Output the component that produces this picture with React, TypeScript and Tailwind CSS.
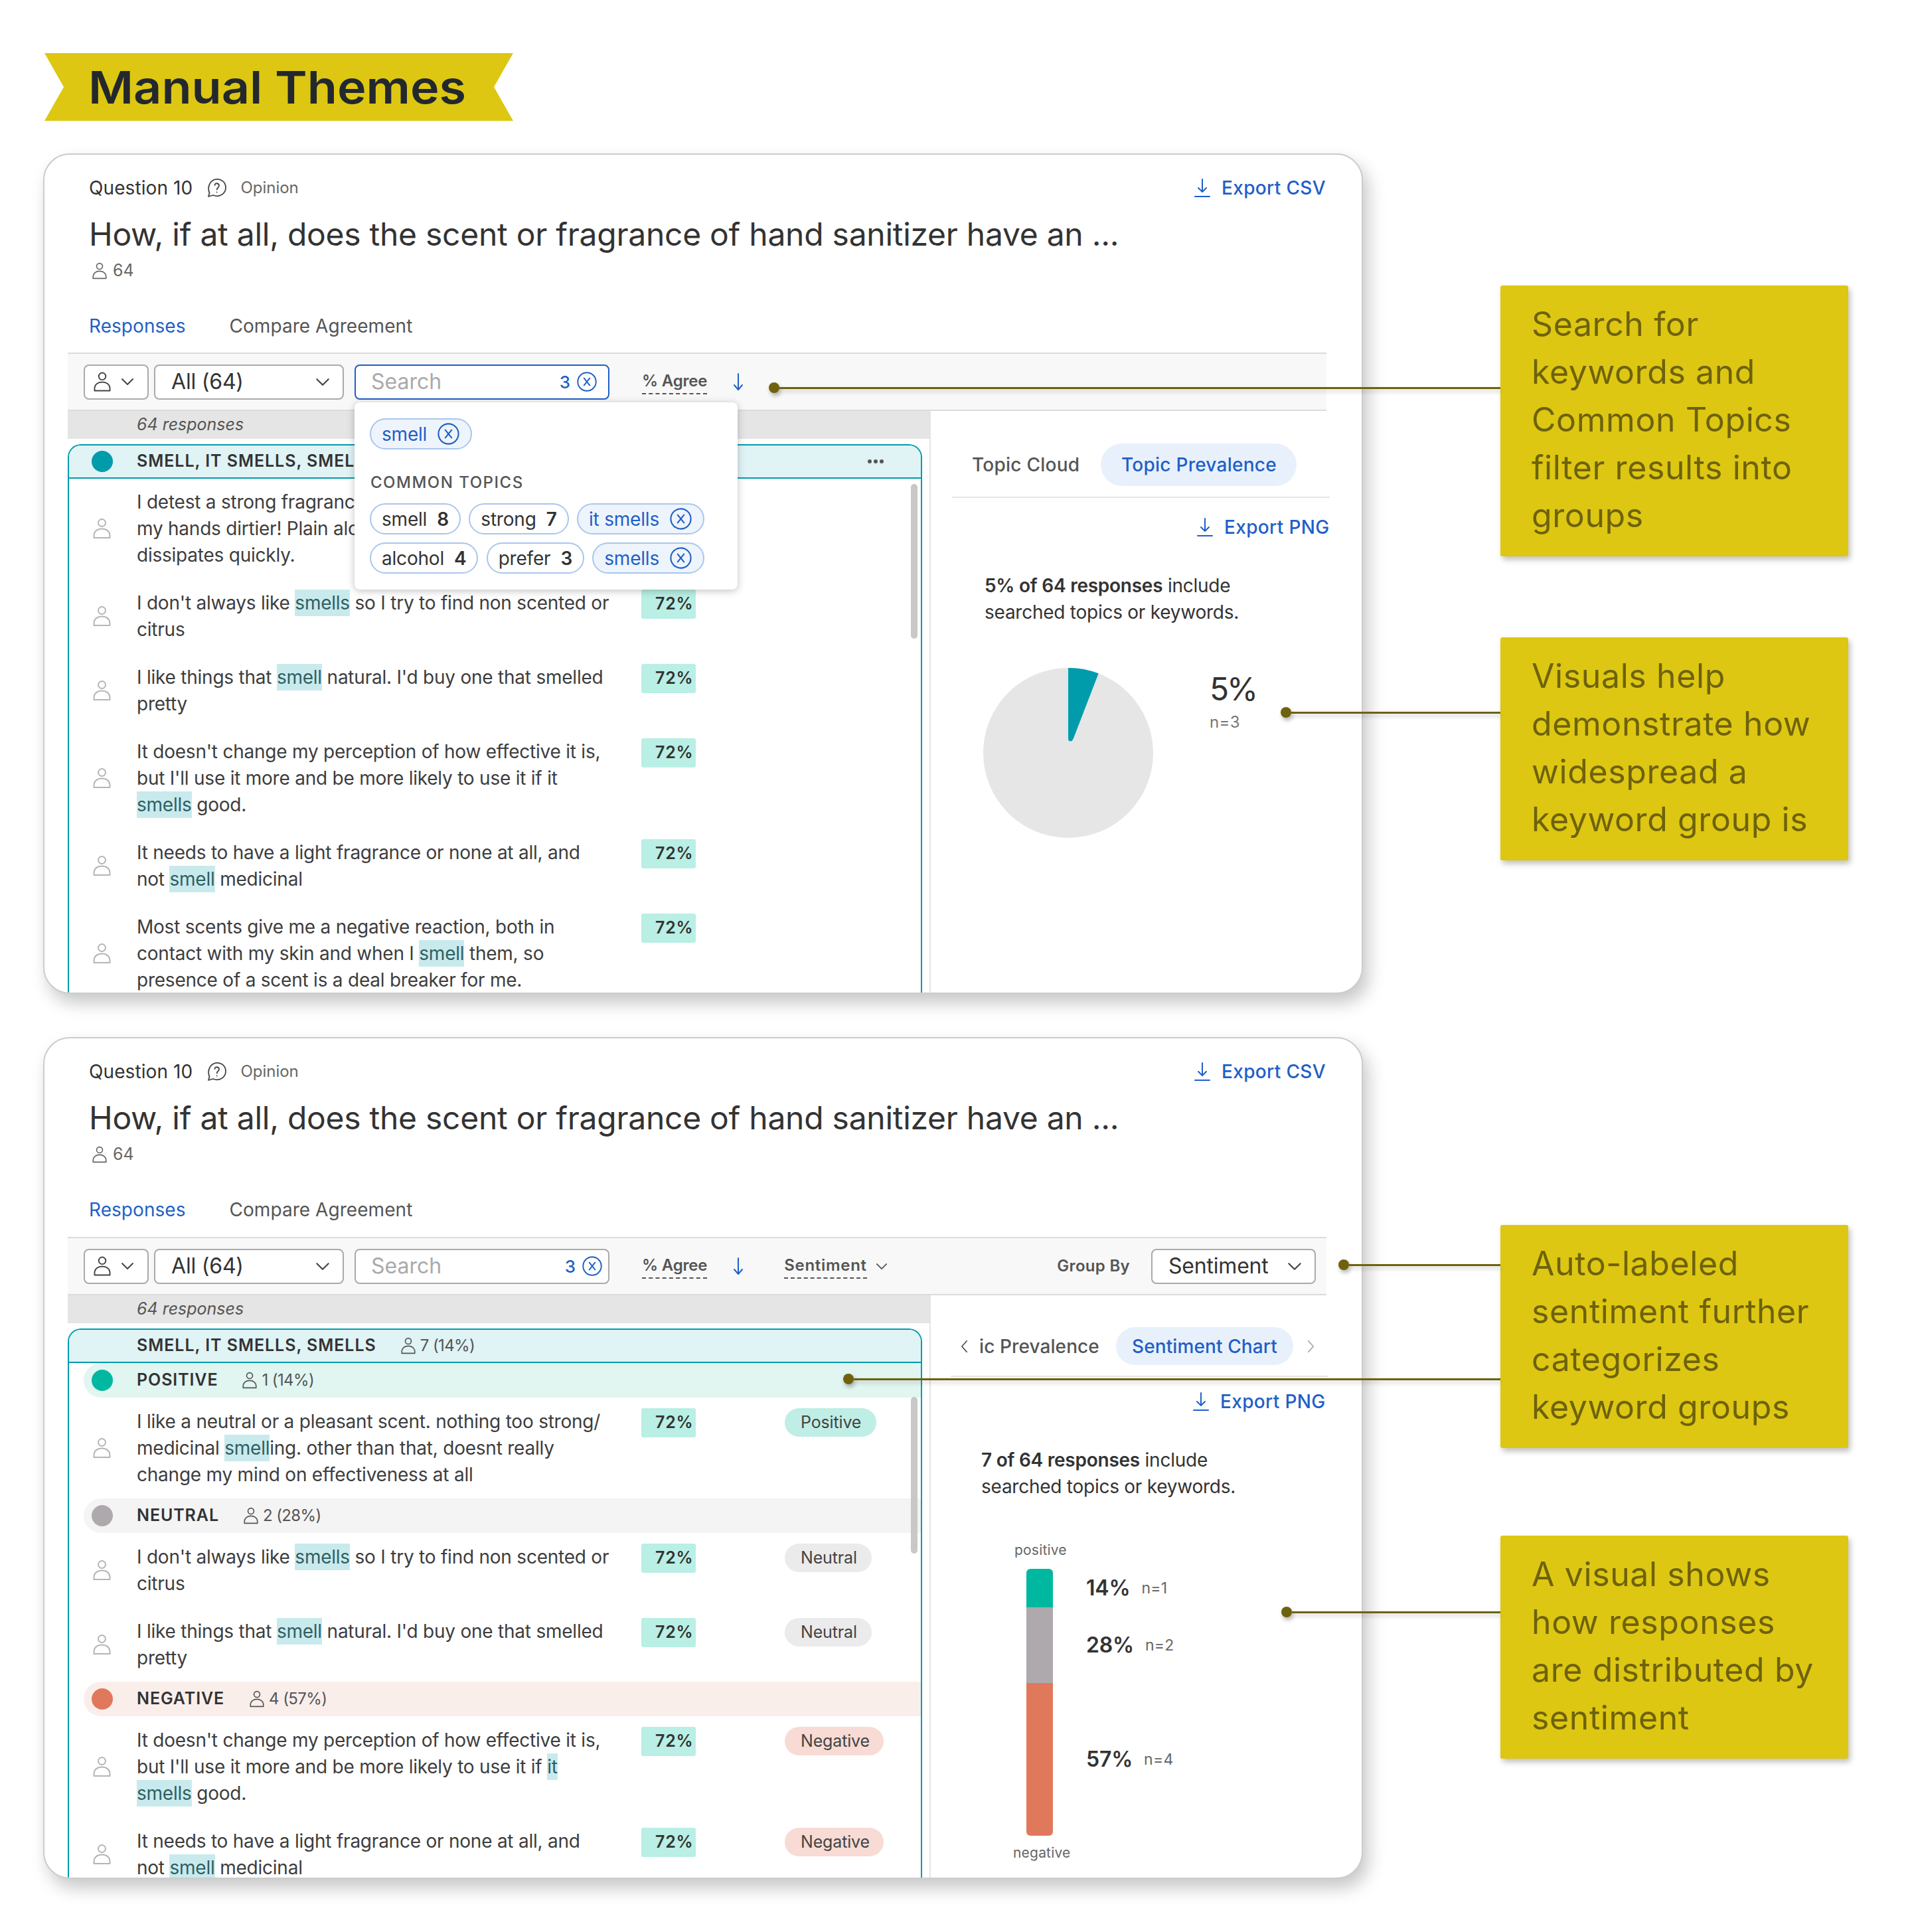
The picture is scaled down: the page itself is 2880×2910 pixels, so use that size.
import React from "react";

const Person = ({ className = "w-[27px] h-[30px] text-[#b5b5b5]", sw = 2 }: { className?: string; sw?: number }) => (
  <svg viewBox="0 0 27 30" className={className + " shrink-0"} fill="none" stroke="currentColor" strokeWidth={sw}>
    <circle cx="13.5" cy="6.5" r="5.5" />
    <path d="M1.5 29 V26 C1.5 19 7 15.5 13.5 15.5 C20 15.5 25.5 19 25.5 26 V29 Z" strokeLinejoin="round" />
  </svg>
);
const Chevron = ({ className = "w-[20px] h-[12px]" }: { className?: string }) => (
  <svg viewBox="0 0 20 12" className={className + " shrink-0"} fill="none" stroke="currentColor" strokeWidth={2} strokeLinecap="round" strokeLinejoin="round">
    <path d="M2 2 L10 10 L18 2" />
  </svg>
);
const Side = ({ d, className }: { d: string; className: string }) => (
  <svg viewBox="0 0 14 24" className={className + " shrink-0"} fill="none" stroke="currentColor" strokeWidth={2} strokeLinecap="round" strokeLinejoin="round">
    <path d={d} />
  </svg>
);
const CircleX = ({ className = "w-[30px] h-[30px]" }: { className?: string }) => (
  <svg viewBox="0 0 28 28" className={className + " shrink-0 text-[#1f5fc8]"} fill="none" stroke="currentColor" strokeWidth={1.8} strokeLinecap="round">
    <circle cx="14" cy="14" r="12.8" />
    <path d="M10 9 L18 19 M18 9 L10 19" />
  </svg>
);
const Download = () => (
  <svg viewBox="0 0 24 28" className="w-[24px] h-[28px] shrink-0 text-[#1f5fc8]" fill="none" stroke="currentColor" strokeWidth={2} strokeLinecap="round" strokeLinejoin="round">
    <path d="M12 1 V20 M6 14 L12 20 L18 14" />
    <path d="M1 27 H23" />
  </svg>
);
const ArrowDown = () => (
  <svg viewBox="0 0 16 26" className="w-[16px] h-[26px] shrink-0 text-[#1f5fc8]" fill="none" stroke="currentColor" strokeWidth={2} strokeLinecap="round" strokeLinejoin="round">
    <path d="M8 1 V25 M2 18 L8 25 L14 18" />
  </svg>
);
const Bubble = () => (
  <svg viewBox="0 0 32 30" className="w-[32px] h-[30px] shrink-0 text-[#444]" fill="none" stroke="currentColor" strokeWidth={1.8} strokeLinecap="round" strokeLinejoin="round">
    <path d="M4 28 L5.5 22.5 C2.5 16 4.5 6.5 12 3 C20 -0.5 30 4.5 30 14.5 C30 24 20 30 11 26 Z" />
    <path d="M13.5 11 C13.5 7 20 7.5 20 11.5 C20 14.5 16.7 14.5 16.7 17.5" />
    <path d="M16.7 21.5 V21.6" />
  </svg>
);

const Text = ({ s }: { s: string }) => {
  const parts = s.split(/(\[[^\]]+\])/);
  return (
    <div className="h-[40px] whitespace-nowrap">
      {parts.map((p, i) =>
        p.startsWith("[") ? (
          <span key={i} className="inline-block h-[40px] bg-[#c9eaec] text-[#2f5f63]">{p.slice(1, -1)}</span>
        ) : (
          <span key={i}>{p}</span>
        )
      )}
    </div>
  );
};

const chipStyles: Record<string, string> = {
  Positive: "bg-[#bfeee6] w-[138px]",
  Neutral: "bg-[#ebebeb] w-[131px]",
  Negative: "bg-[#f7dbd4] w-[149px]",
};

const Row = ({ lines, chip, clipped }: { lines: string[]; chip?: string; clipped?: boolean }) => (
  <div className="flex py-[16px]">
    <div className="w-[102px] pl-[36px] flex items-center shrink-0"><Person /></div>
    <div className={"shrink-0 text-[28px] leading-[40px] text-[#3d3d3d] tracking-[-0.23px] " + (clipped ? "w-[328px]" : "w-[760px]")}>
      {lines.map((l, i) => <Text key={i} s={l} />)}
    </div>
    {!clipped && (
      <div className="w-[82px] h-[44px] shrink-0 rounded-[3px] bg-[#b9efe4] flex items-center pl-[21px] text-[25px] font-semibold tracking-[0.8px] text-[#333]">72%</div>
    )}
    {chip && (
      <div className={"ml-[134px] h-[43px] rounded-full pl-[24px] flex items-center text-[25px] tracking-[-0.15px] text-[#444] " + chipStyles[chip]}>{chip}</div>
    )}
  </div>
);

const SentRow = ({ label, count, bg, dot, iconMl }: { label: string; count: string; bg: string; dot: string; iconMl: string }) => (
  <div className={"ml-[22px] h-[52px] rounded-l-full flex items-center pl-[12px] " + bg}>
    <div className={"w-[32px] h-[32px] rounded-full " + dot} />
    <div className="ml-[36px] text-[25px] font-semibold tracking-[0.9px] text-[#333]">{label}</div>
    <div className={"flex items-center " + iconMl}>
      <Person className="w-[22px] h-[26px] text-[#555]" />
      <span className="ml-[7px] text-[24px] tracking-[-0.6px] text-[#555]">{count}</span>
    </div>
  </div>
);

const TopChip = ({ t, n }: { t: string; n: string }) => (
  <div className="h-[47px] rounded-full border-2 border-[#a9c6ee] bg-white pl-[16px] pr-[16px] flex items-center text-[28px] tracking-[-0.2px] text-[#333]">
    <span>{t}</span><span className="ml-[15px] font-semibold">{n}</span>
  </div>
);
const SelChip = ({ t }: { t: string }) => (
  <div className="h-[47px] rounded-full border-2 border-[#a9c6ee] bg-[#eef4fc] pl-[16px] pr-[17px] flex items-center text-[28px] tracking-[-0.2px] text-[#1f5fc8]">
    <span>{t}</span><span className="ml-[16px]"><CircleX className="w-[33px] h-[33px]" /></span>
  </div>
);

const Popover = () => (
  <div className="absolute left-[467px] top-[373px] w-[577px] h-[282px] bg-white rounded-[8px] shadow-[0_2px_12px_rgba(0,0,0,0.25)] pl-[23px] pt-[24px] z-10">
    <div className="flex"><SelChip t="smell" /></div>
    <div className="mt-[36px] h-[28px] leading-[28px] text-[24px] font-medium tracking-[1.5px] text-[#555] pl-[1px]">COMMON TOPICS</div>
    <div className="mt-[17px] w-[504px] flex justify-between"><TopChip t="smell" n="8" /><TopChip t="strong" n="7" /><SelChip t="it smells" /></div>
    <div className="mt-[12px] w-[504px] flex justify-between"><TopChip t="alcohol" n="4" /><TopChip t="prefer" n="3" /><SelChip t="smells" /></div>
  </div>
);

const Dropdown = ({ w, label }: { w: string; label: string }) => (
  <div className={"h-[53px] rounded-[8px] border-2 border-[#aaa] bg-white flex items-center justify-between pl-[24px] pr-[19px] text-[32px] tracking-[-0.2px] text-[#333] " + w}>
    <span>{label}</span><Chevron className="w-[22px] h-[13px] text-[#444]" />
  </div>
);
const Dotted = ({ children, wide }: { children: React.ReactNode; wide?: boolean }) => (
  <span className={"inline-block border-b-2 border-dashed border-[#555] text-[24px] leading-[36px] font-semibold text-[#555] " + (wide ? "tracking-[0.7px]" : "tracking-[-0.2px]")}>{children}</span>
);

const Export = ({ label, ml }: { label: string; ml: string }) => (
  <div className={"flex items-center text-[28px] font-medium tracking-[0.35px] text-[#1f5fc8] " + ml}>
    <Download /><span className="ml-[17px]">{label}</span>
  </div>
);

const Card = ({ second, children, right }: { second?: boolean; children: React.ReactNode; right: React.ReactNode }) => (
  <div className={"relative w-[1988px] rounded-[40px] border-2 border-[#ccc] bg-white shadow-[8px_14px_26px_rgba(0,0,0,0.22)] overflow-hidden flex flex-col " + (second ? "h-[1268px] mt-[65px]" : "h-[1266px] mt-[49px]")}>
    <div className="pl-[67px] pr-[54px] pt-[30px]">
      <div className="h-[40px] flex items-center text-[28px] tracking-[0.1px] text-[#333]">
        <span>Question 10</span>
        <span className="ml-[20px]"><Bubble /></span>
        <span className="ml-[20px] text-[24px] tracking-normal text-[#666]">Opinion</span>
        <div className="ml-auto"><Export label="Export CSV" ml="" /></div>
      </div>
      <div className="mt-[18px] h-[64px] leading-[64px] text-[48px] text-[#333] tracking-[-0.27px] whitespace-nowrap">How, if at all, does the scent or fragrance of hand sanitizer have an ...</div>
      <div className="mt-[8px] h-[30px] flex items-center pl-[5px]">
        <Person className="w-[22px] h-[26px] text-[#666]" />
        <span className="ml-[9px] text-[25px] text-[#666]">64</span>
      </div>
      <div className="mt-[48px] h-[40px] flex items-center text-[28px] tracking-[0.05px]">
        <span className="text-[#1f5fc8]">Responses</span>
        <span className="ml-[66px] text-[#555]">Compare Agreement</span>
      </div>
    </div>
    <div className={"ml-[35px] w-[1896px] h-[88px] shrink-0 bg-[#f8f8f8] border-y-2 border-[#dcdcdc] flex items-center pl-[24px] pr-[16px] " + (second ? "mt-[21px]" : "mt-[20px]")}>
      <div className="w-[98px] h-[53px] rounded-[8px] border-2 border-[#aaa] bg-white flex items-center pl-[13px]">
        <Person className="w-[26px] h-[30px] text-[#444]" />
        <Chevron className="ml-[15px] w-[20px] h-[12px] text-[#444]" />
      </div>
      <div className="ml-[8px]"><Dropdown w="w-[286px]" label="All (64)" /></div>
      <div className={"ml-[16px] w-[384px] h-[53px] rounded-[8px] border-2 bg-white flex items-center pl-[23px] text-[32px] text-[#aaa] " + (second ? "border-[#aaa] pr-[9px]" : "border-[#1f5fc8] pr-[17px]")}>
        <span>Search</span>
        <span className="ml-auto mr-[10px] text-[26px] font-medium text-[#1f5fc8]">3</span>
        <CircleX />
      </div>
      <div className="ml-[49px]"><Dotted>% Agree</Dotted></div>
      <div className="ml-[39px]"><ArrowDown /></div>
      {second && (
        <>
          <div className="ml-[61px]"><Dotted wide>Sentiment</Dotted></div>
          <Chevron className="ml-[13px] w-[18px] h-[11px] text-[#555]" />
          <span className="ml-auto text-[24px] font-semibold tracking-[0.3px] text-[#555]">Group By</span>
          <div className="ml-[32px]"><Dropdown w="w-[248px]" label="Sentiment" /></div>
        </>
      )}
    </div>
    <div className="ml-[35px] flex-1 min-h-0 flex">
      <div className="w-[1298px] shrink-0 flex flex-col min-h-0">
        <div className="h-[42px] shrink-0 bg-[#e5e5e5] pl-[104px] flex items-center text-[25px] italic text-[#555]">64 responses</div>
        <div className="relative mt-[8px] w-[1287px] flex-1 min-h-0 border-x-2 border-t-2 border-[#019cac] rounded-t-[20px] overflow-hidden">
          {children}
        </div>
      </div>
      <div className="flex-1 border-l-2 border-[#e5e5e5] min-w-0">{right}</div>
    </div>
  </div>
);

const GroupHeader = ({ first }: { first?: boolean }) => (
  <div className="h-[50px] bg-[#e0f3f5] border-b-2 border-[#019cac] flex items-center text-[25px] font-semibold tracking-[0.95px] text-[#333]">
    <div className="w-[102px] pl-[34px]">{first && <div className="w-[32px] h-[32px] rounded-full bg-[#019cac]" />}</div>
    {first ? (
      <span className="whitespace-nowrap">SMELL, IT SMELLS, SMEL</span>
    ) : (
      <>
        <span>SMELL, IT SMELLS, SMELLS</span>
        <div className="ml-[37px] flex items-center font-normal tracking-[-0.6px] text-[24px] text-[#555]">
          <Person className="w-[22px] h-[26px] text-[#555]" />
          <span className="ml-[7px]">7 (14%)</span>
        </div>
      </>
    )}
    {first && <span className="ml-auto mr-[56px] flex gap-[3px]"><i className="w-[6px] h-[6px] rounded-full bg-[#555]" /><i className="w-[6px] h-[6px] rounded-full bg-[#555]" /><i className="w-[6px] h-[6px] rounded-full bg-[#555]" /></span>}
  </div>
);

const Pie = () => (
  <svg viewBox="0 0 256 256" className="w-[256px] h-[256px] shrink-0">
    <circle cx="128" cy="128" r="128" fill="#e6e6e6" />
    <path d="M128 0 A128 128 0 0 1 173.7 8.3 L136 106 Q134 110.5 131.5 110.5 Q128 110.5 128 106 Z" fill="#019cac" />
  </svg>
);

const Seg = ({ h, cls, pct, n, nm }: { h: string; cls: string; pct: string; n: string; nm: string }) => (
  <div className="flex items-center">
    <div className={"w-[40px] " + h + " " + cls} />
    <span className="ml-[50px] text-[32px] font-semibold tracking-[-0.2px] text-[#333]">{pct}</span>
    <span className={"text-[23px] tracking-[0.3px] text-[#666] " + nm}>{n}</span>
  </div>
);

const Right1 = () => (
  <div>
    <div className="pt-[49px] pl-[62px] flex items-center h-[113px] text-[28px] font-medium tracking-[0.25px]">
      <span className="text-[#555]">Topic Cloud</span>
      <span className="ml-[32px] h-[64px] w-[295px] rounded-full bg-[#e8f1fb] flex items-center justify-center text-[#1f5fc8]">Topic Prevalence</span>
    </div>
    <div className="ml-[32px] w-[569px] mt-[16px] h-[2px] bg-[#e5e5e5]" />
    <Export label="Export PNG" ml="mt-[23px] ml-[401px]" />
    <div className="mt-[47px] ml-[81px] text-[28px] leading-[40px] tracking-[-0.25px] text-[#333]">
      <div><span className="font-semibold">5% of 64 responses</span> include</div>
      <div>searched topics or keywords.</div>
    </div>
    <div className="mt-[64px] ml-[79px] flex">
      <Pie />
      <div className="ml-[85px] pt-[4px]">
        <div className="text-[48px] leading-[56px] tracking-[-3.2px] text-[#333]">5%</div>
        <div className="mt-[6px] text-[24px] leading-[32px] tracking-[0.4px] text-[#777]">n=3</div>
      </div>
    </div>
  </div>
);

const Right2 = () => (
  <div>
    <div className="pt-[48px] pl-[44px] flex items-center h-[105px] text-[28px] font-medium tracking-[0.1px]">
      <Side d="M11 3 L3 12 L11 21" className="w-[13px] h-[22px] text-[#555]" />
      <span className="ml-[16px] text-[#555]">ic Prevalence</span>
      <span className="ml-[25px] h-[57px] w-[267px] rounded-full bg-[#e8f1fb] flex items-center justify-center text-[#1f5fc8]">Sentiment Chart</span>
      <Side d="M3 3 L11 12 L3 21" className="ml-[20px] w-[13px] h-[22px] text-[#aaa]" />
    </div>
    <div className="ml-[30px] w-[569px] mt-[16px] h-[2px] bg-[#e5e5e5]" />
    <Export label="Export PNG" ml="mt-[16px] ml-[395px]" />
    <div className="mt-[47px] ml-[76px] text-[28px] leading-[40px] tracking-[-0.25px] text-[#333]">
      <div><span className="font-semibold">7 of 64 responses</span> include</div>
      <div>searched topics or keywords.</div>
    </div>
    <div className="mt-[59px] ml-[126px] text-[21px] leading-[34px] tracking-[0.2px] text-[#666]">positive</div>
    <div className="mt-[11px] ml-[144px] flex flex-col">
      <Seg h="h-[58px]" cls="bg-[#00b8a0] rounded-t-[6px]" pct="14%" n="n=1" nm="ml-[17px]" />
      <Seg h="h-[114px]" cls="bg-[#aea9ac]" pct="28%" n="n=2" nm="ml-[17px]" />
      <Seg h="h-[230px]" cls="bg-[#e0795c] rounded-b-[6px]" pct="57%" n="n=4" nm="ml-[17px]" />
    </div>
    <div className="mt-[9px] ml-[124px] text-[21px] leading-[34px] tracking-[0.2px] text-[#666]">negative</div>
  </div>
);

const Scrollbar = ({ h, top }: { h: string; top: string }) => (
  <div className={"absolute right-[5px] w-[10px] rounded-full bg-[#c8c8c8] " + h + " " + top} />
);

const Callout = ({ lines, mt }: { lines: string[]; mt: string }) => (
  <div className={"w-[524px] rounded-[3px] bg-[#ddc712] pt-[22px] pb-[26px] pl-[47px] shadow-[3px_5px_8px_rgba(0,0,0,0.25)] text-[50px] leading-[72px] tracking-[0.6px] text-[#6e620c] whitespace-nowrap " + mt}>
    {lines.map((l) => <div key={l}>{l}</div>)}
  </div>
);

const Connector = ({ left, top, w }: { left: string; top: string; w: string }) => (
  <div className={"absolute h-[16px] flex items-center z-20 " + left + " " + top + " " + w}>
    <div className="w-[16px] h-[16px] rounded-full bg-[#6e620c] shrink-0 shadow-[2px_4px_6px_rgba(0,0,0,0.3)]" />
    <div className="flex-1 h-[3px] bg-[#6e620c] shadow-[0_4px_6px_rgba(0,0,0,0.2)]" />
  </div>
);

const Popover2 = () => (
  <div className="absolute left-[67px] top-[233px] w-0 h-0"><Popover /></div>
);

export default function App() {
  return (
    <div className="relative w-[2880px] h-[2910px] bg-white overflow-hidden flex [font-family:Inter,sans-serif]">
      <div className="w-[2260px] shrink-0 pl-[65px] pt-[80px]">
        <div className="ml-[2px] w-[706px] h-[102px] bg-[#ddc712] [clip-path:polygon(0_0,706px_0,677px_51px,706px_102px,0_102px,29px_51px)] flex items-center pl-[66px] text-[68px] font-semibold text-[#23282d] whitespace-nowrap">
          <span className="inline-block origin-left scale-x-[1.085]">Manual Themes</span>
        </div>
        <Card right={<Right1 />}>
          <GroupHeader first />
          <div className="-mt-[1px]">
            <Row clipped lines={["I detest a strong fragranc", "my hands dirtier! Plain alc", "dissipates quickly."]} />
            <Row lines={["I don't always like [smells] so I try to find non scented or", "citrus"]} />
            <Row lines={["I like things that [smell] natural. I'd buy one that smelled", "pretty"]} />
            <Row lines={["It doesn't change my perception of how effective it is,", "but I'll use it more and be more likely to use it if it", "[smells] good."]} />
            <Row lines={["It needs to have a light fragrance or none at all, and", "not [smell] medicinal"]} />
            <Row lines={["Most scents give me a negative reaction, both in", "contact with my skin and when I [smell] them, so", "presence of a scent is a deal breaker for me."]} />
          </div>
          <Scrollbar top="top-[58px]" h="h-[233px]" />
        </Card>
        <Card second right={<Right2 />}>
          <GroupHeader />
          <SentRow label="POSITIVE" count="1 (14%)" bg="bg-[#e1f5f1]" dot="bg-[#00b8a0]" iconMl="ml-[37px]" />
          <Row chip="Positive" lines={["I like a neutral or a pleasant scent. nothing too strong/", "medicinal [smell]ing. other than that, doesnt really", "change my mind on effectiveness at all"]} />
          <SentRow label="NEUTRAL" count="2 (28%)" bg="bg-[#f4f4f4]" dot="bg-[#aea9ac]" iconMl="ml-[37px]" />
          <Row chip="Neutral" lines={["I don't always like [smells] so I try to find non scented or", "citrus"]} />
          <Row chip="Neutral" lines={["I like things that [smell] natural. I'd buy one that smelled", "pretty"]} />
          <SentRow label="NEGATIVE" count="4 (57%)" bg="bg-[#faeeeb]" dot="bg-[#e0795c]" iconMl="ml-[38px]" />
          <Row chip="Negative" lines={["It doesn't change my perception of how effective it is,", "but I'll use it more and be more likely to use it if [it]", "[smells] good."]} />
          <Row chip="Negative" lines={["It needs to have a light fragrance or none at all, and", "not [smell] medicinal"]} />
          <Scrollbar top="top-[101px]" h="h-[236px]" />
        </Card>
      </div>
      <div className="w-[524px] shrink-0">
        <Callout mt="mt-[430px]" lines={["Search for", "keywords and", "Common Topics", "filter results into", "groups"]} />
        <Callout mt="mt-[122px]" lines={["Visuals help", "demonstrate how", "widespread a", "keyword group is"]} />
        <Callout mt="mt-[549px]" lines={["Auto-labeled", "sentiment further", "categorizes", "keyword groups"]} />
        <Callout mt="mt-[132px]" lines={["A visual shows", "how responses", "are distributed by", "sentiment"]} />
      </div>
      <Popover2 />
      <Connector left="left-[1158px]" top="top-[576px]" w="w-[1102px]" />
      <Connector left="left-[1929px]" top="top-[1065px]" w="w-[331px]" />
      <Connector left="left-[2016px]" top="top-[1897px]" w="w-[244px]" />
      <Connector left="left-[1270px]" top="top-[2069px]" w="w-[990px]" />
      <Connector left="left-[1930px]" top="top-[2420px]" w="w-[330px]" />
    </div>
  );
}
